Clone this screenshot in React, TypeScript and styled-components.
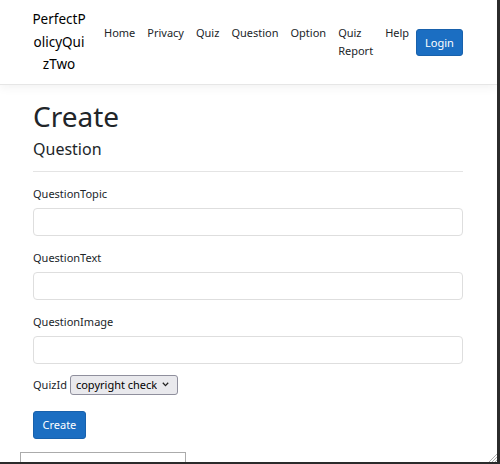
import React from 'react';
import styled, { createGlobalStyle } from 'styled-components';

const GlobalStyle = createGlobalStyle`
    html, body {
        margin: 0;
        padding: 0;
        background: #fff;
    }
    body {
        font-family: "Noto Sans", "Open Sans", sans-serif;
        color: #212529;
    }
    * {
        box-sizing: border-box;
    }
`;

const Frame = styled.div`
    position: relative;
    width: 500px;
    height: 464px;
    overflow: hidden;
    background: #fff;
    border-right: 3px solid #2b2b2b;
    border-bottom: 2px solid #2b2b2b;
`;

const Navbar = styled.header`
    display: flex;
    align-items: center;
    height: 85px;
    padding: 0 34px 0 31px;
    border-bottom: 1px solid #e6e6e6;
    box-shadow: 0 3px 9px rgba(0, 0, 0, 0.05);
`;

const Brand = styled.a`
    width: 56px;
    margin-right: 11px;
    font-size: 13.5px;
    line-height: 22.5px;
    text-align: center;
    word-break: break-all;
    color: #000;
    text-decoration: none;
`;

const NavList = styled.ul`
    display: flex;
    margin: 0;
    padding: 0;
    list-style: none;
`;

const NavLink = styled.a<{ $stack?: boolean }>`
    display: block;
    padding: 6px 6px;
    width: ${(p) => (p.$stack ? 'min-content' : 'auto')};
    font-size: 11px;
    line-height: 18px;
    color: #212529;
    text-decoration: none;
`;

const Button = styled.button<{ $pad: string }>`
    padding: ${(p) => p.$pad};
    font-family: inherit;
    font-size: 11px;
    line-height: 18px;
    color: #fff;
    background: #1b6ec2;
    border: 1px solid #1861ac;
    border-radius: 3px;
`;

const LoginButton = styled(Button)`
    margin-left: 1px;
    line-height: 17px;
`;

const Main = styled.main`
    padding: 15px 34px 0 33px;
`;

const Title = styled.h1`
    margin: 0 0 6px;
    font-size: 28px;
    font-weight: 400;
    line-height: 33.6px;
`;

const Subtitle = styled.h4`
    margin: 0;
    font-size: 16px;
    font-weight: 400;
    line-height: 19.2px;
`;

const Rule = styled.hr`
    margin: 12px 0 13px;
    border: 0;
    border-top: 1px solid #e4e4e4;
`;

const Field = styled.div`
    margin-bottom: 13px;
`;

const Label = styled.label`
    display: block;
    margin-bottom: 5px;
    font-size: 11px;
    line-height: 18px;
`;

const Input = styled.input`
    display: block;
    width: 100%;
    height: 28px;
    padding: 4px 9px;
    font-family: inherit;
    font-size: 11px;
    border: 1px solid #dedede;
    border-radius: 4px;
    background: #fff;
`;

const InlineRow = styled.div`
    display: flex;
    align-items: center;
    gap: 3px;
    margin-top: -2px;
    margin-bottom: 16px;
    font-size: 11px;
`;

const SelectWrap = styled.div`
    position: relative;
    display: inline-flex;
`;

const Select = styled.select`
    appearance: none;
    width: 108px;
    height: 20px;
    padding: 0 20px 0 5px;
    font-family: inherit;
    font-size: 11px;
    color: #000;
    background: #e9e9ed;
    border: 1px solid #8f8f9d;
    border-radius: 3px;
`;

const Chevron = styled.svg`
    position: absolute;
    right: 9px;
    top: 7px;
    pointer-events: none;
`;

const Footer = styled.div`
    width: 166px;
    height: 30px;
    margin: 13px 0 0 20px;
    border: 1px solid #ababab;
    border-bottom: 0;
`;

const Grip = styled.svg`
    position: absolute;
    right: 0;
    bottom: 0;
`;

const links = ['Home', 'Privacy', 'Quiz', 'Question', 'Option', 'Quiz Report', 'Help'];

const App = () => (
    <Frame>
        <GlobalStyle />
        <Navbar>
            <Brand>PerfectPolicyQuizTwo</Brand>
            <NavList>
                {links.map((l) => (
                    <li key={l}>
                        <NavLink $stack={l.includes(' ')}>{l}</NavLink>
                    </li>
                ))}
            </NavList>
            <LoginButton $pad="4px 8px">Login</LoginButton>
        </Navbar>
        <Main>
            <Title>Create</Title>
            <Subtitle>Question</Subtitle>
            <Rule />
            <Field>
                <Label>QuestionTopic</Label>
                <Input />
            </Field>
            <Field>
                <Label>QuestionText</Label>
                <Input />
            </Field>
            <Field>
                <Label>QuestionImage</Label>
                <Input />
            </Field>
            <InlineRow>
                <span>QuizId</span>
                <SelectWrap>
                    <Select defaultValue="1">
                        <option value="1">copyright check</option>
                    </Select>
                    <Chevron width="7" height="5" viewBox="0 0 7 5">
                        <path d="M0.8 0.8 L3.5 3.6 L6.2 0.8" fill="none" stroke="#222" strokeWidth="1.3" />
                    </Chevron>
                </SelectWrap>
            </InlineRow>
            <Button $pad="4px 8.5px">Create</Button>
        </Main>
        <Footer />
        <Grip width="10" height="10" viewBox="0 0 10 10">
            <path d="M10 2 L2 10 M10 5 L5 10 M10 8 L8 10" stroke="#b0b0b0" strokeWidth="1" />
        </Grip>
    </Frame>
);

export default App;
